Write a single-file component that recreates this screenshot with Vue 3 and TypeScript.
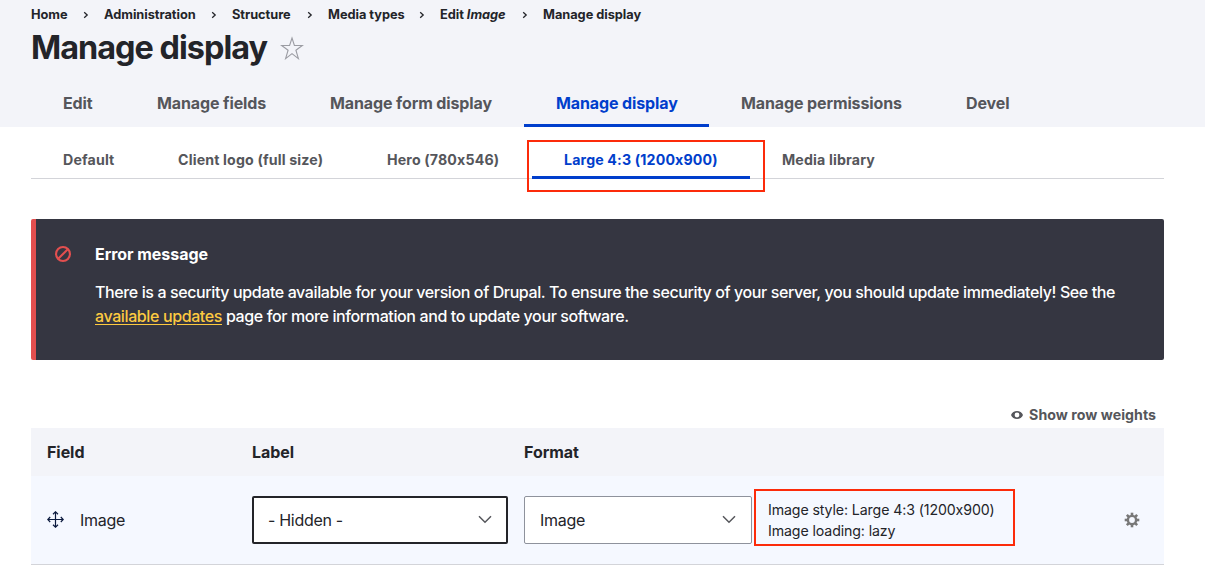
<script setup lang="ts">
interface Crumb {
  text: string
  em?: string
}

interface Tab {
  label: string
  active?: boolean
}

const crumbs: Crumb[] = [
  { text: 'Home' },
  { text: 'Administration' },
  { text: 'Structure' },
  { text: 'Media types' },
  { text: 'Edit', em: 'Image' },
  { text: 'Manage display' },
]

const primaryTabs: Tab[] = [
  { label: 'Edit' },
  { label: 'Manage fields' },
  { label: 'Manage form display' },
  { label: 'Manage display', active: true },
  { label: 'Manage permissions' },
  { label: 'Devel' },
]

const secondaryTabs: Tab[] = [
  { label: 'Default' },
  { label: 'Client logo (full size)' },
  { label: 'Hero (780x546)' },
  { label: 'Large 4:3 (1200x900)', active: true },
  { label: 'Media library' },
]
</script>

<template>
  <div class="page">
    <header class="header">
      <nav class="breadcrumb">
        <span v-for="(crumb, i) in crumbs" :key="i" class="crumb">
          <span class="crumb-text">{{ crumb.text }}<template v-if="crumb.em">{{ ' ' }}<em>{{ crumb.em }}</em></template></span>
          <svg v-if="i < crumbs.length - 1" class="crumb-arrow" viewBox="0 0 6 8" width="6" height="8">
            <path d="M1.2 1.2 4.2 4 1.2 6.8" fill="none" stroke="#232429" stroke-width="1.3" />
          </svg>
        </span>
      </nav>
      <div class="title-row">
        <h1>Manage display</h1>
        <svg class="star" viewBox="0 0 24 24" width="24" height="24">
          <path
            d="M12 2 14.4 9.5H22.3L15.9 14.2 18.4 22.6 12 17.6 5.6 22.6 8.1 14.2 1.7 9.5H9.6Z"
            fill="none"
            stroke="#9b9ca3"
            stroke-width="1.1"
          />
        </svg>
      </div>
      <nav class="tabs primary">
        <a v-for="tab in primaryTabs" :key="tab.label" :class="{ active: tab.active }">{{ tab.label }}</a>
      </nav>
    </header>

    <main>
      <nav class="tabs secondary">
        <a v-for="tab in secondaryTabs" :key="tab.label" :class="{ active: tab.active }">
          {{ tab.label }}
          <span v-if="tab.active" class="mark mark-tab"></span>
        </a>
      </nav>

      <section class="message">
        <svg class="message-icon" viewBox="0 0 16 16" width="16" height="16">
          <g fill="none" stroke="#e34f4f" stroke-width="2.1">
            <circle cx="8" cy="8" r="6.950" />
            <path d="M3.2 12.8 12.8 3.2" />
          </g>
        </svg>
        <div>
          <h2>Error message</h2>
          <p>
            <span class="line line-one">There is a security update available for your version of Drupal. To ensure the security of your server, you should update immediately! See the</span>
            <span class="line line-two"><a>available updates</a> page for more information and to update your software.</span>
          </p>
        </div>
      </section>

      <div class="weights">
        <svg viewBox="0 0 12 8" width="12" height="8">
          <path
            fill="#55565b"
            fill-rule="evenodd"
            d="M6 0C3.3 0 1 1.600 0 4c1 2.400 3.300 4 6 4s5-1.600 6-4C11 1.600 8.700 0 6 0Zm0 1.600a2.400 2.400 0 1 1 0 4.800 2.400 2.400 0 0 1 0-4.800Z"
          />
        </svg>
        <span>Show row weights</span>
      </div>

      <div class="table">
        <div class="row head">
          <span>Field</span>
          <span>Label</span>
          <span>Format</span>
        </div>
        <div class="row body">
          <div class="field">
            <svg viewBox="0 0 17 17" width="17" height="17">
              <g fill="none" stroke="#0b1a3e" stroke-width="1.2">
                <path d="M8.500 1V16M1 8.500H16" />
                <path d="M6 3.200 8.500.8 11 3.200M6 13.800 8.500 16.200 11 13.800M3.200 6 .8 8.500 3.200 11M13.800 6 16.200 8.500 13.800 11" />
              </g>
            </svg>
            <span>Image</span>
          </div>
          <div class="select hovered">
            <span>- Hidden -</span>
            <svg viewBox="0 0 14 9" width="14" height="9">
              <path d="M1 1.200 7 7.200 13 1.200" fill="none" stroke="#55565b" stroke-width="1.500" />
            </svg>
          </div>
          <div class="select format">
            <span>Image</span>
            <svg viewBox="0 0 14 9" width="14" height="9">
              <path d="M1 1.200 7 7.200 13 1.200" fill="none" stroke="#55565b" stroke-width="1.500" />
            </svg>
          </div>
          <div class="summary">
            <span>Image style: Large 4:3 (1200x900)</span>
            <span>Image loading: lazy</span>
          </div>
          <svg class="gear" viewBox="-8 -8 16 16" width="16" height="16">
            <g fill="#787878">
              <rect v-for="n in 4" :key="n" x="-1.300" y="-7.300" width="2.600" height="14.600" :transform="`rotate(${n * 45})`" />
              <circle r="5.300" />
            </g>
            <circle r="2.900" fill="#f5f8ff" />
          </svg>
        </div>
      </div>
    </main>
  </div>
</template>

<style>
body {
  background: #fff;
}
</style>

<style scoped>
.page {
  box-sizing: border-box;
  width: 1205px;
  height: 571px;
  overflow: hidden;
  color: #232429;
  font-family: Inter, 'Liberation Sans', sans-serif;
  font-size: 16px;
  white-space: nowrap;
}

h1,
h2,
p {
  margin: 0;
}

.header {
  height: 127px;
  padding-left: 31px;
  background: #f3f4f9;
}

.breadcrumb {
  display: grid;
  grid-template-columns: 73px 128px 96px 112px 103px 110px;
  height: 29px;
  font-size: 12.8px;
  font-weight: 700;
  line-height: 29px;
  letter-spacing: -0.04px;
}

.crumb {
  display: flex;
  align-items: center;
  justify-content: space-between;
}

.crumb-arrow {
  margin: 1px 15px 0 0;
}

.title-row {
  display: flex;
  height: 38px;
}

h1 {
  width: 249px;
  font-size: 32.4px;
  font-weight: 700;
  line-height: 38px;
  letter-spacing: -0.97px;
}

.star {
  margin-top: 7px;
}

.tabs {
  display: grid;
}

.tabs a {
  position: relative;
  box-sizing: border-box;
  padding-left: 32px;
  color: #55565b;
  font-weight: 700;
}

.tabs a.active {
  border-bottom: 3px solid #003ecc;
  color: #003ecc;
}

.primary {
  grid-template-columns: 94px 173px 226px 185px 225px 110px;
  height: 60px;
  line-height: 73px;
  letter-spacing: -0.12px;
}

.primary a {
  height: 60px;
}

main {
  width: 1133px;
  margin-left: 31px;
}

.secondary {
  box-sizing: border-box;
  grid-template-columns: 115px 209px 177px 218px 160px;
  height: 52px;
  border-bottom: 1px solid #d3d4d9;
  font-size: 14.2px;
  line-height: 66px;
  letter-spacing: 0.15px;
}

.secondary a {
  height: 52px;
}

.mark {
  position: absolute;
  box-sizing: border-box;
  border: 2px solid #fc2b0a;
}

.mark-tab {
  top: 13px;
  left: -5px;
  width: 238px;
  height: 52px;
}

.message {
  display: flex;
  box-sizing: border-box;
  height: 141px;
  margin-top: 40px;
  padding: 24px 0 0 19px;
  border-left: 5px solid #e34f4f;
  border-radius: 2px;
  background: #353641;
  color: #fff;
}

.message-icon {
  margin: 3px 24px 0 0;
}

h2 {
  height: 37px;
  font-size: 16px;
  font-weight: 700;
  line-height: 23px;
  letter-spacing: -0.05px;
}

.line {
  display: block;
  font-weight: 450;
  line-height: 24px;
}

.line-one {
  letter-spacing: -0.393px;
}

.line-two {
  letter-spacing: -0.385px;
}

.message a {
  color: #fdca40;
  text-decoration: underline;
  text-underline-offset: 2px;
}

.weights {
  display: flex;
  align-items: center;
  justify-content: flex-end;
  gap: 6px;
  height: 27px;
  margin-top: 41px;
  padding-right: 8px;
  color: #55565b;
  font-size: 14.2px;
  font-weight: 700;
  letter-spacing: 0.03px;
}

.row {
  display: grid;
  grid-template-columns: 205px 272px 244px 1fr 16px;
  box-sizing: border-box;
  padding: 0 24px 0 16px;
}

.head {
  height: 48px;
  background: #f3f4f9;
  font-weight: 700;
  line-height: 49px;
  letter-spacing: -0.05px;
}

.body {
  align-items: center;
  height: 89px;
  border-bottom: 1px solid #d3d4d9;
  background: #f5f8ff;
  letter-spacing: -0.3px;
}

.field {
  display: flex;
  align-items: center;
  gap: 16px;
}

.field svg {
  margin-bottom: 2px;
}

.select {
  display: flex;
  align-items: center;
  justify-content: space-between;
  box-sizing: border-box;
  width: 256px;
  height: 48px;
  padding: 0 15px;
  border: 1px solid #8e929c;
  border-radius: 2px;
  background: #fff;
}

.select.hovered {
  padding: 0 14px;
  border: 2px solid #232429;
}

.select.format {
  width: 228px;
}

.select svg {
  margin-bottom: 1px;
}

.summary {
  display: flex;
  flex-direction: column;
  box-sizing: border-box;
  width: 261px;
  height: 57px;
  margin: -5px 0 0 -14px;
  padding: 8px 0 0 12px;
  border: 2px solid #fc2b0a;
  font-size: 14.2px;
  line-height: 21px;
  letter-spacing: -0.12px;
}
</style>
